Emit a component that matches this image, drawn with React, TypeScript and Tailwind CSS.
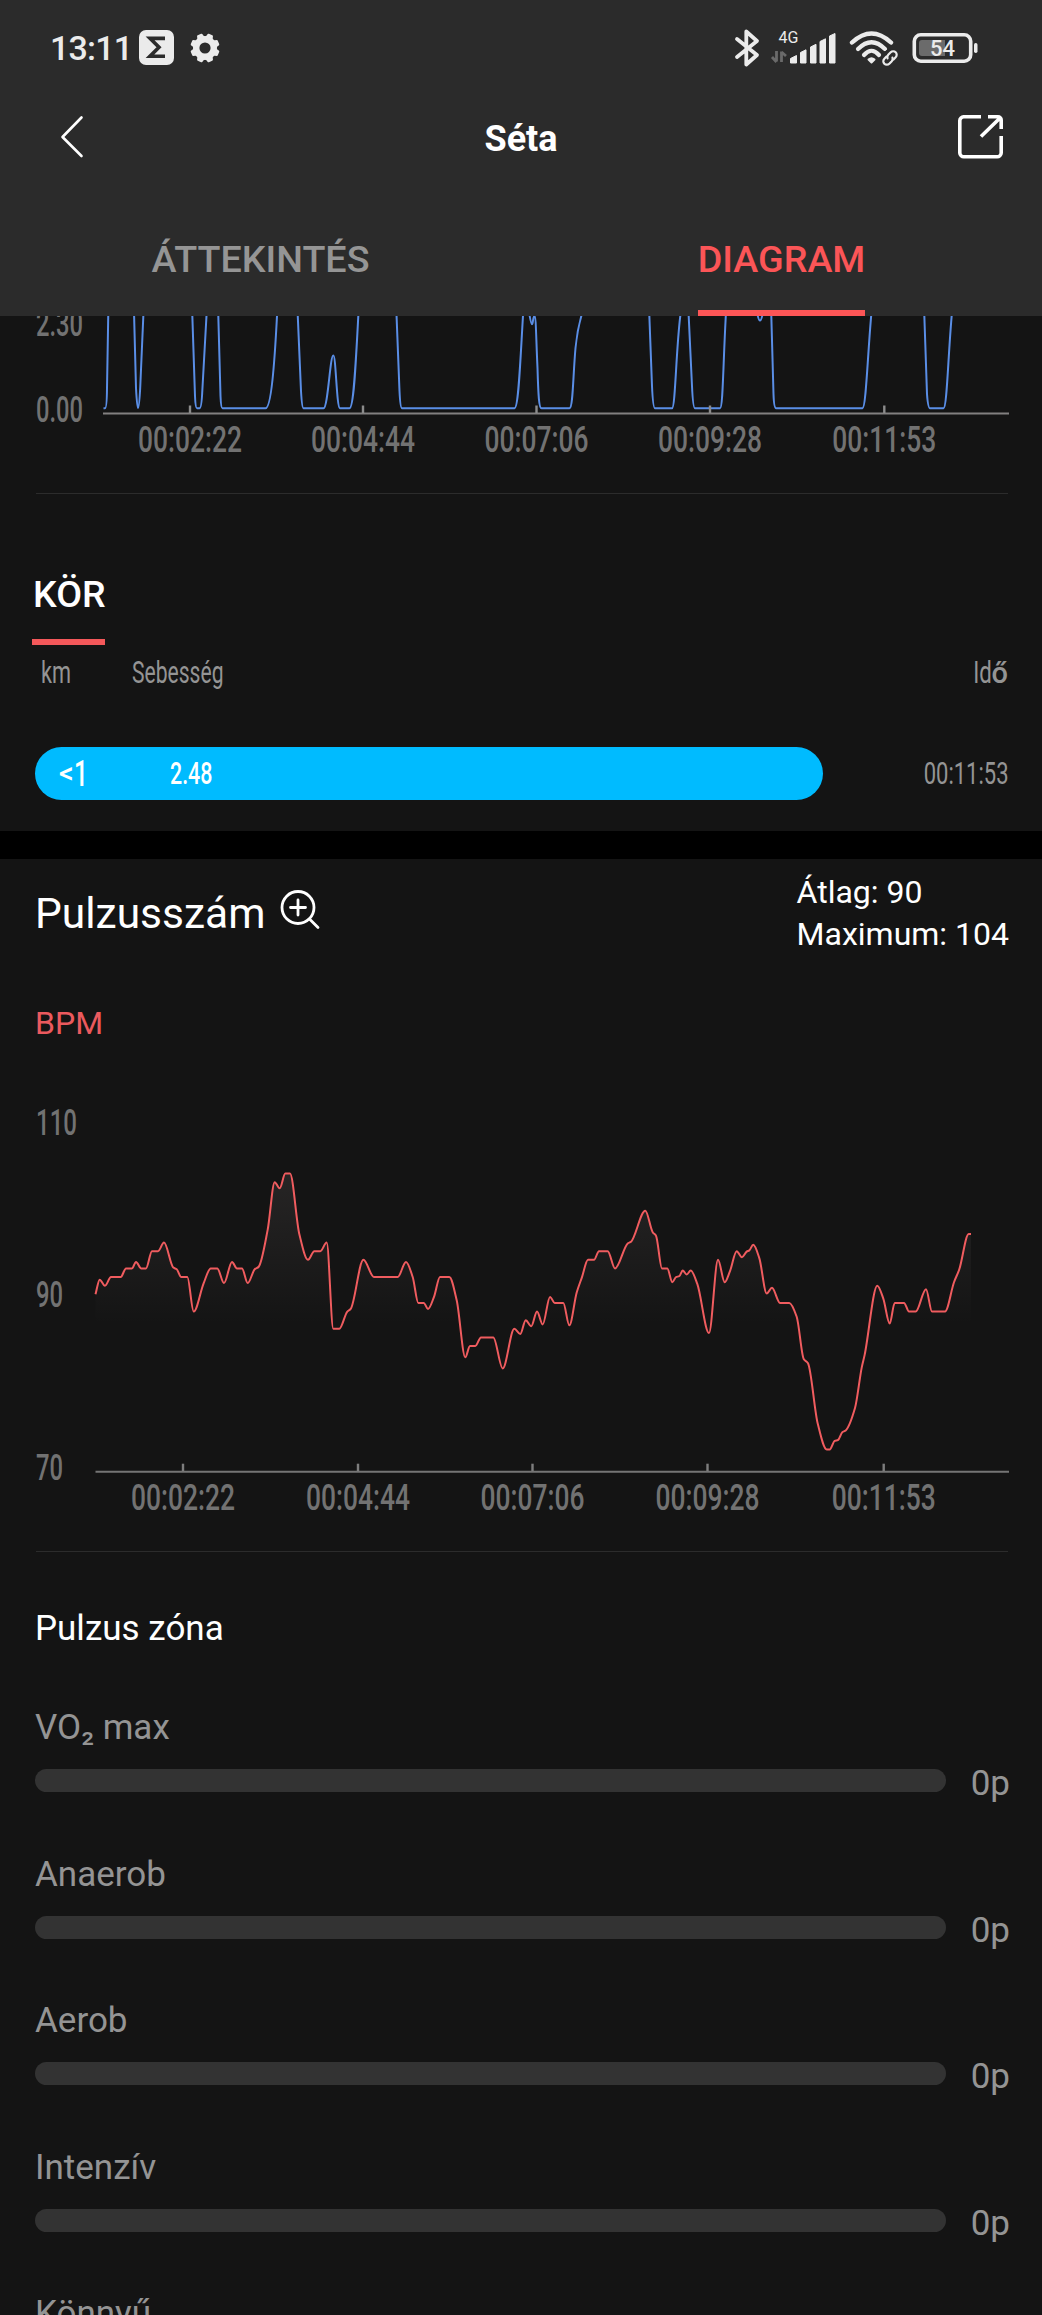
type Point = [number, number];

const speedTicks = [
  { x: 190, label: '00:02:22' },
  { x: 363, label: '00:04:44' },
  { x: 536.5, label: '00:07:06' },
  { x: 710, label: '00:09:28' },
  { x: 884.3, label: '00:11:53' },
];

const pulseTicks = [
  { x: 183, label: '00:02:22' },
  { x: 358, label: '00:04:44' },
  { x: 532.5, label: '00:07:06' },
  { x: 707.5, label: '00:09:28' },
  { x: 883.7, label: '00:11:53' },
];

// [x, bpm]
const pulse: Point[] = [
  [95.5, 90], [99.7, 91.7], [105, 91], [111, 92], [120.7, 92], [126, 93], [132, 93], [136, 93.75],
  [141.3, 93], [146, 93], [152, 95], [158, 95], [164, 96], [173.3, 93.1], [176.7, 92.9], [181.3, 92],
  [187.3, 92], [193.7, 88], [203.7, 91.3], [210.7, 93], [217.3, 93], [224, 91.3], [232, 93.75],
  [237, 93], [242, 93], [247.7, 91.3], [254.7, 92.9], [258.7, 93.2], [267.7, 97.5], [274.7, 103],
  [279.7, 102.3], [285.3, 104], [290, 104], [299.3, 97], [308, 94], [314.3, 95], [320.3, 95],
  [326.7, 96], [333.3, 86], [339.3, 86], [347.3, 88], [350.7, 88.3], [363.4, 94], [374, 92],
  [397.7, 92], [406, 93.75], [412.7, 92], [418.3, 89], [423.7, 89], [428, 88.3], [434, 89.7],
  [440, 92], [449.3, 92], [456.7, 89.3], [465.3, 82.7], [470, 84], [475.3, 84], [481, 85],
  [493.3, 85], [502.7, 81.4], [514.3, 86], [520.3, 85.4], [525.7, 87], [531.3, 86.3], [537, 88],
  [542.7, 86.5], [550, 89.7], [554.7, 89], [563.3, 89], [569.3, 86.4], [576.7, 90.2], [582, 92],
  [588, 94], [594, 94], [599, 95], [607.7, 95], [615, 93], [627.7, 95.9], [631, 96.1], [645.3, 99.7],
  [652.7, 97.2], [656, 96.8], [662, 93], [667.3, 93], [672.3, 91.4], [676, 92], [679.3, 92.1],
  [682.7, 92.75], [686.7, 92.3], [690.7, 92.75], [697.3, 91.2], [709, 85.5], [718, 94], [724.7, 91.4],
  [730, 92.7], [736.7, 95], [742, 94.3], [746.7, 94.95], [749.3, 95.1], [753.3, 95.75], [759.3, 94.2],
  [766.7, 90.1], [772, 90.75], [780, 89], [789.3, 89], [796.7, 87.4], [803.7, 82.5], [808, 82],
  [817.7, 75], [826.7, 72], [829.7, 72], [834.7, 73], [838, 73.1], [842.3, 74], [845.7, 74.2],
  [855, 76.8], [861.7, 81.5], [864.7, 83], [877.3, 91], [883.3, 89.5], [889.7, 86.6], [894.7, 89],
  [904, 89], [909, 88], [915.7, 88], [926, 90.6], [932, 88], [945, 88], [954, 91.4], [959.3, 92.9],
  [968.7, 97], [971, 97],
];

const zones = ['VO₂ max', 'Anaerob', 'Aerob', 'Intenzív', 'Könnyű'];

const bpmToY = (bpm: number) => 251.3 - (bpm - 90) * 8.62;

// Monotone cubic curve, so flat stretches stay flat
function smoothPath(points: Point[]) {
  const n = points.length;
  const slopes = points.slice(1).map((p, i) => (p[1] - points[i][1]) / (p[0] - points[i][0]));
  const tangents = points.map((_, i) => {
    if (i === 0) return slopes[0];
    if (i === n - 1) return slopes[n - 2];
    const a = slopes[i - 1];
    const b = slopes[i];
    return a * b <= 0 ? 0 : (2 * a * b) / (a + b);
  });
  let d = `M${points[0][0]} ${points[0][1]}`;
  for (let i = 1; i < n; i++) {
    const [x0, y0] = points[i - 1];
    const [x1, y1] = points[i];
    const dx = (x1 - x0) / 3;
    d += `C${x0 + dx} ${y0 + tangents[i - 1] * dx} ${x1 - dx} ${y1 - tangents[i] * dx} ${x1} ${y1}`;
  }
  return d;
}

const AxisText = ({ x, y, width, children }: { x: number; y: number; width: number; children: string }) => (
  <text
    x={x}
    y={y}
    textLength={width}
    lengthAdjust="spacingAndGlyphs"
    className="fill-[#727272] text-[36px] font-medium"
  >
    {children}
  </text>
);

const StatusBar = () => (
  <div className="flex h-[95px] items-center pl-[50px] pr-[64px] text-[#ebebeb]">
    <span className="w-[89px] pt-px text-[34px] font-medium leading-none tracking-[-0.8px]">13:11</span>
    <svg width="35" height="35" viewBox="0 0 35 35">
      <rect width="35" height="35" rx="7" fill="#ebebeb" />
      <path d="M26 8.4H11L20 17.3L11 26.2H26" fill="none" stroke="#2b2b2b" strokeWidth="3.6" />
    </svg>
    <svg width="30" height="30" viewBox="-15 -15 30 30" className="ml-4">
      <circle r="8.8" fill="none" stroke="#ebebeb" strokeWidth="6.4" />
      {[0, 1, 2, 3, 4, 5, 6, 7].map((i) => (
        <path
          key={i}
          d="M-4 -10L-2.8 -14Q-2.500 -14.600 -1.800 -14.600H1.800Q2.500 -14.600 2.800 -14L4 -10Z"
          fill="#ebebeb"
          transform={`rotate(${22.5 + i * 45})`}
        />
      ))}
    </svg>

    <div className="ml-auto flex items-center">
      {/* Bluetooth */}
      <svg width="26" height="40" viewBox="0 0 26 40" fill="none" stroke="#ebebeb" strokeWidth="3.8" strokeLinecap="round" strokeLinejoin="round">
        <path d="M3 11L23 27L12.3 36.5V3.5L23 13L3 29" />
      </svg>
      {/* Mobile signal */}
      <svg width="68" height="40" viewBox="0 0 68 40" className="ml-[9px]" fill="#ebebeb">
        <text x="9.5" y="15" className="text-[16px]">4G</text>
        <path d="M7.5 23V33.5M3 29L7.5 34M12.5 34V23.5M12.5 24L17 28" fill="none" stroke="#6a6a6a" strokeWidth="2.8" />
        <path d="M21.5 30.5L27.5 27.5V35H21.5ZM31.5 24.5L37 21.8V35H31.5ZM41.5 19L47 16.3V35H41.5ZM51 13.5L56.5 10.8V35H51ZM60.5 8L66 5.5V35H60.5Z" stroke="#ebebeb" strokeWidth="1" strokeLinejoin="round" />
      </svg>
      {/* Wifi */}
      <svg width="50" height="40" viewBox="0 0 50 40" className="ml-[11px]" fill="none" stroke="#ebebeb" strokeLinecap="round">
        <path d="M4 14.5Q23.5 -3.5 43 14.5" strokeWidth="4.4" />
        <path d="M10 21Q23.5 7.5 37 21" strokeWidth="4.2" />
        <path d="M16 27Q23.5 18.5 31 27" strokeWidth="4.2" />
        <path d="M20.5 31.5Q23.5 29 26.5 31.5L23.5 34.5Z" fill="#ebebeb" strokeWidth="2" strokeLinejoin="round" />
        <circle cx="42" cy="30" r="8.5" fill="#2b2b2b" stroke="none" />
        <g strokeWidth="2.2" transform="rotate(-45 42 30)">
          <path d="M40.5 26.5H37.5A3.5 3.5 0 0 0 37.5 33.5H41A3.5 3.5 0 0 0 44 31.5" />
          <path d="M43.5 33.5H46.5A3.5 3.5 0 0 0 46.5 26.5H43A3.5 3.5 0 0 0 40 28.5" />
        </g>
      </svg>
      {/* Battery */}
      <svg width="66" height="30" viewBox="0 0 66 30" className="ml-[14px]">
        <rect x="2.3" y="1.8" width="56.4" height="26.4" rx="6.500" fill="none" stroke="#ebebeb" strokeWidth="3.6" />
        <path d="M10 7H33V23H10A3 3 0 0 1 7 20V10A3 3 0 0 1 10 7Z" fill="#6b6b6b" />
        <rect x="62" y="10" width="3.5" height="10" rx="1.7" fill="#ebebeb" />
        <text x="30.5" y="23" textAnchor="middle" className="fill-[#ebebeb] text-[22px] font-medium">54</text>
      </svg>
    </div>
  </div>
);

const Header = () => (
  <header className="h-[316px] bg-[#2b2b2b]">
    <StatusBar />
    <div className="flex h-[86px] items-center pl-[58px] pr-[36px]">
      <div className="flex-1">
        <svg width="50" height="46" viewBox="0 0 50 46" fill="none" stroke="#fff" strokeWidth="2.6" strokeLinecap="round" strokeLinejoin="round">
          <path d="M23.5 2.5L4.500 22L23.500 41" />
        </svg>
      </div>
      <h1 className="mr-[22px] pt-px text-[36px] font-bold leading-none text-white">Séta</h1>
      <div className="flex flex-1 justify-end">
        <svg width="50" height="46" viewBox="0 0 50 46" fill="none" stroke="#fff" strokeWidth="3.6" strokeLinejoin="round">
          <path d="M25 1.8H8A4 4 0 0 0 3.8 6V38A4 4 0 0 0 8 41.8H41A4 4 0 0 0 45.2 38V21" />
          <path d="M32 1.8H42A3.200 3.200 0 0 1 45.200 5V14M44 3L25 21.5" />
        </svg>
      </div>
    </div>
    <nav className="grid h-[135px] grid-cols-2 text-[37.7px] font-medium leading-[40px]">
      <button className="flex flex-col items-center pt-[58px] text-[#959595]">ÁTTEKINTÉS</button>
      <button className="flex flex-col items-center justify-between pt-[58px] text-[#fb5557]">
        DIAGRAM
        <span className="h-[6px] w-[167px] bg-[#fd5556]" />
      </button>
    </nav>
  </header>
);

const SpeedChart = () => (
  <svg width="1042" height="154" viewBox="0 0 1042 154" className="block">
    <AxisText x={36} y={20} width={47}>2.30</AxisText>
    <AxisText x={36} y={105.5} width={47}>0.00</AxisText>
    <path
      d="M103.500 92.300H105Q106.800 92.300 107 72L108.300 -4
        M134 -4L136 72Q138 112 140.200 72L143.500 -4
        M192.200 -4L195 80Q195.500 92.300 197 92.300H199.500Q201.500 92.300 202.300 75L206.700 -4
        M218.200 -4L220.500 80Q221 92.300 222.500 92.300H265.500C271 92 274.500 50 277.200 -4
        M297.600 -4L301 75Q302 92.300 303.500 92.300H323.500C328 92 330 39.500 333.300 39.500C336 39.500 336.500 92 340 92.300H349.500C353.500 92 355.500 55 358.500 -4
        M396.400 -4L399.500 75Q400.300 92.300 402 92.300H514.500C518.500 92 520 50 523.200 -4
        M529 -4C530 2 531 8.300 532 8.300S533 0 534.500 0S536 20 537.500 52C538.300 80 539 92.300 541.500 92.300H569.500C573 92 573 60 575.500 32C577 16 580 4 582.500 -4
        M649.200 -4L652 70Q653 92.300 655 92.300H672C675.500 92 676 30 680.800 -4
        M688.500 -4L692 70Q693 92.300 695 92.300H720C723 92 723 50 726 -4
        M757 -4Q760 13 763 -4
        M771.200 -4L773.500 78Q774 92.300 776 92.300H862.500C866 92 867.500 40 871.500 -4
        M924.200 -4L927 78Q928 92.300 930 92.300H943.500C947 92 948 40 952 -4"
      fill="none"
      stroke="#5a8ee6"
      strokeWidth="2"
      strokeLinejoin="round"
    />
    <path d="M103 97.5H1009" stroke="#828080" strokeWidth="2" />
    {speedTicks.map((t) => (
      <g key={t.label}>
        <path d={`M${t.x} 89.5V97`} stroke="#8b8b8b" strokeWidth="2.4" />
        <AxisText x={t.x - 52} y={135.5} width={104}>{t.label}</AxisText>
      </g>
    ))}
  </svg>
);

const PulseChart = () => {
  const line = smoothPath(pulse.map(([x, bpm]) => [x, bpmToY(bpm)]));
  return (
    <svg width="1042" height="480" viewBox="0 0 1042 480" className="block">
      <defs>
        <linearGradient id="pulseFill" gradientUnits="userSpaceOnUse" x1="0" y1="130" x2="0" y2="282">
          <stop offset="0" stopColor="#ffe8e8" stopOpacity="0.08" />
          <stop offset="1" stopColor="#ffe8e8" stopOpacity="0" />
        </linearGradient>
      </defs>
      <AxisText x={36} y={92} width={41}>110</AxisText>
      <AxisText x={36} y={264} width={27}>90</AxisText>
      <AxisText x={36} y={436.5} width={27}>70</AxisText>
      <path d={`${line}V428H95.5Z`} fill="url(#pulseFill)" />
      <path d={line} fill="none" stroke="#f05c5f" strokeWidth="2" strokeLinejoin="round" />
      <path d="M95.5 428.7H1009" stroke="#757575" strokeWidth="2" />
      {pulseTicks.map((t) => (
        <g key={t.label}>
          <path d={`M${t.x} 420.7V428`} stroke="#7d7d7d" strokeWidth="2.4" />
          <AxisText x={t.x - 52} y={466.5} width={104}>{t.label}</AxisText>
        </g>
      ))}
    </svg>
  );
};

const Divider = () => <div className="ml-9 mr-[34px] h-px bg-[#2c2c2c]" />;

const Laps = () => (
  <section className="pb-[31px]">
    <h2 className="ml-[32px] mt-[80px] w-[73px] whitespace-nowrap pl-[1px] text-[37.5px] font-medium leading-[40px] text-white">KÖR</h2>
    <div className="ml-[32px] mt-[25px] h-[6px] w-[73px] bg-[#f4585a]" />
    <div className="mt-[10px] flex pl-[41px] pr-[34px] text-[31px] leading-[36px] text-[#949494]">
      <span className="w-[91px]">
        <span className="inline-block origin-left scale-x-[0.7]">km</span>
      </span>
      <span className="inline-block origin-left scale-x-[0.68]">Sebesség</span>
      <span className="ml-auto flex">
        <span className="inline-block w-[26px] origin-right scale-x-[0.72]">Id</span>
        <span className="text-[29px] font-medium">ő</span>
      </span>
    </div>
    <div className="mt-[55px] flex h-[54px] items-center justify-between pl-[35px] pr-[33px]">
      <div className="flex h-[53px] w-[788px] items-center rounded-full bg-[#00bbff] pl-[24px] text-white">
        <span className="text-[29px] font-medium leading-none">&lt;</span>
        <span className="inline-block origin-left scale-x-[0.66] text-[37px] font-medium leading-none">1</span>
        <span className="ml-[75px] inline-block origin-left scale-x-[0.69] text-[31px] font-medium leading-none">2.48</span>
      </div>
      <span className="inline-block origin-right scale-x-[0.71] text-[31px] leading-none text-[#949494]">00:11:53</span>
    </div>
  </section>
);

const PulseHeader = () => (
  <>
    <div className="flex items-center pl-[35px] pr-[33px] pt-[12px] text-white">
      <h2 className="pt-px text-[42.5px] leading-[83px]">Pulzusszám</h2>
      <svg width="40" height="40" viewBox="0 0 40 40" className="mb-1.5 ml-[15px]" fill="none" stroke="#fff" strokeWidth="2.8">
        <circle cx="18" cy="17.5" r="16" />
        <path d="M29.5 29L38 37.5M10.5 17.5H25.5M18 10V25" strokeLinecap="round" />
      </svg>
      <div className="ml-auto text-[32px] leading-[42px]">
        <p>Átlag: 90</p>
        <p>Maximum: 104</p>
      </div>
    </div>
    <p className="mt-[48px] pl-[35px] text-[32px] leading-[40px] text-[#eb5a5e]">BPM</p>
  </>
);

const Zone = ({ name }: { name: string }) => (
  <div className="h-[146.6px] pl-[35px] pr-[32px] text-[35px] leading-[40px] text-[#949494]">
    <p>{name}</p>
    <div className="mt-[21px] flex h-[23.3px] items-center justify-between">
      <div className="h-full w-[911px] rounded-full bg-[#333]" />
      <span className="mt-[7px]">0p</span>
    </div>
  </div>
);

export default function App() {
  return (
    <div className="h-[2315px] w-[1042px] overflow-hidden bg-[#141414] font-['Roboto',sans-serif]">
      <Header />
      <SpeedChart />
      <div className="h-[23px]" />
      <Divider />
      <Laps />
      <div className="h-[28px] bg-black" />
      <PulseHeader />
      <PulseChart />
      <div className="h-[28px]" />
      <Divider />
      <h3 className="mb-[59px] mt-[57px] pl-[35px] text-[35px] leading-[40px] text-white">Pulzus zóna</h3>
      {zones.map((name) => (
        <Zone key={name} name={name} />
      ))}
    </div>
  );
}
